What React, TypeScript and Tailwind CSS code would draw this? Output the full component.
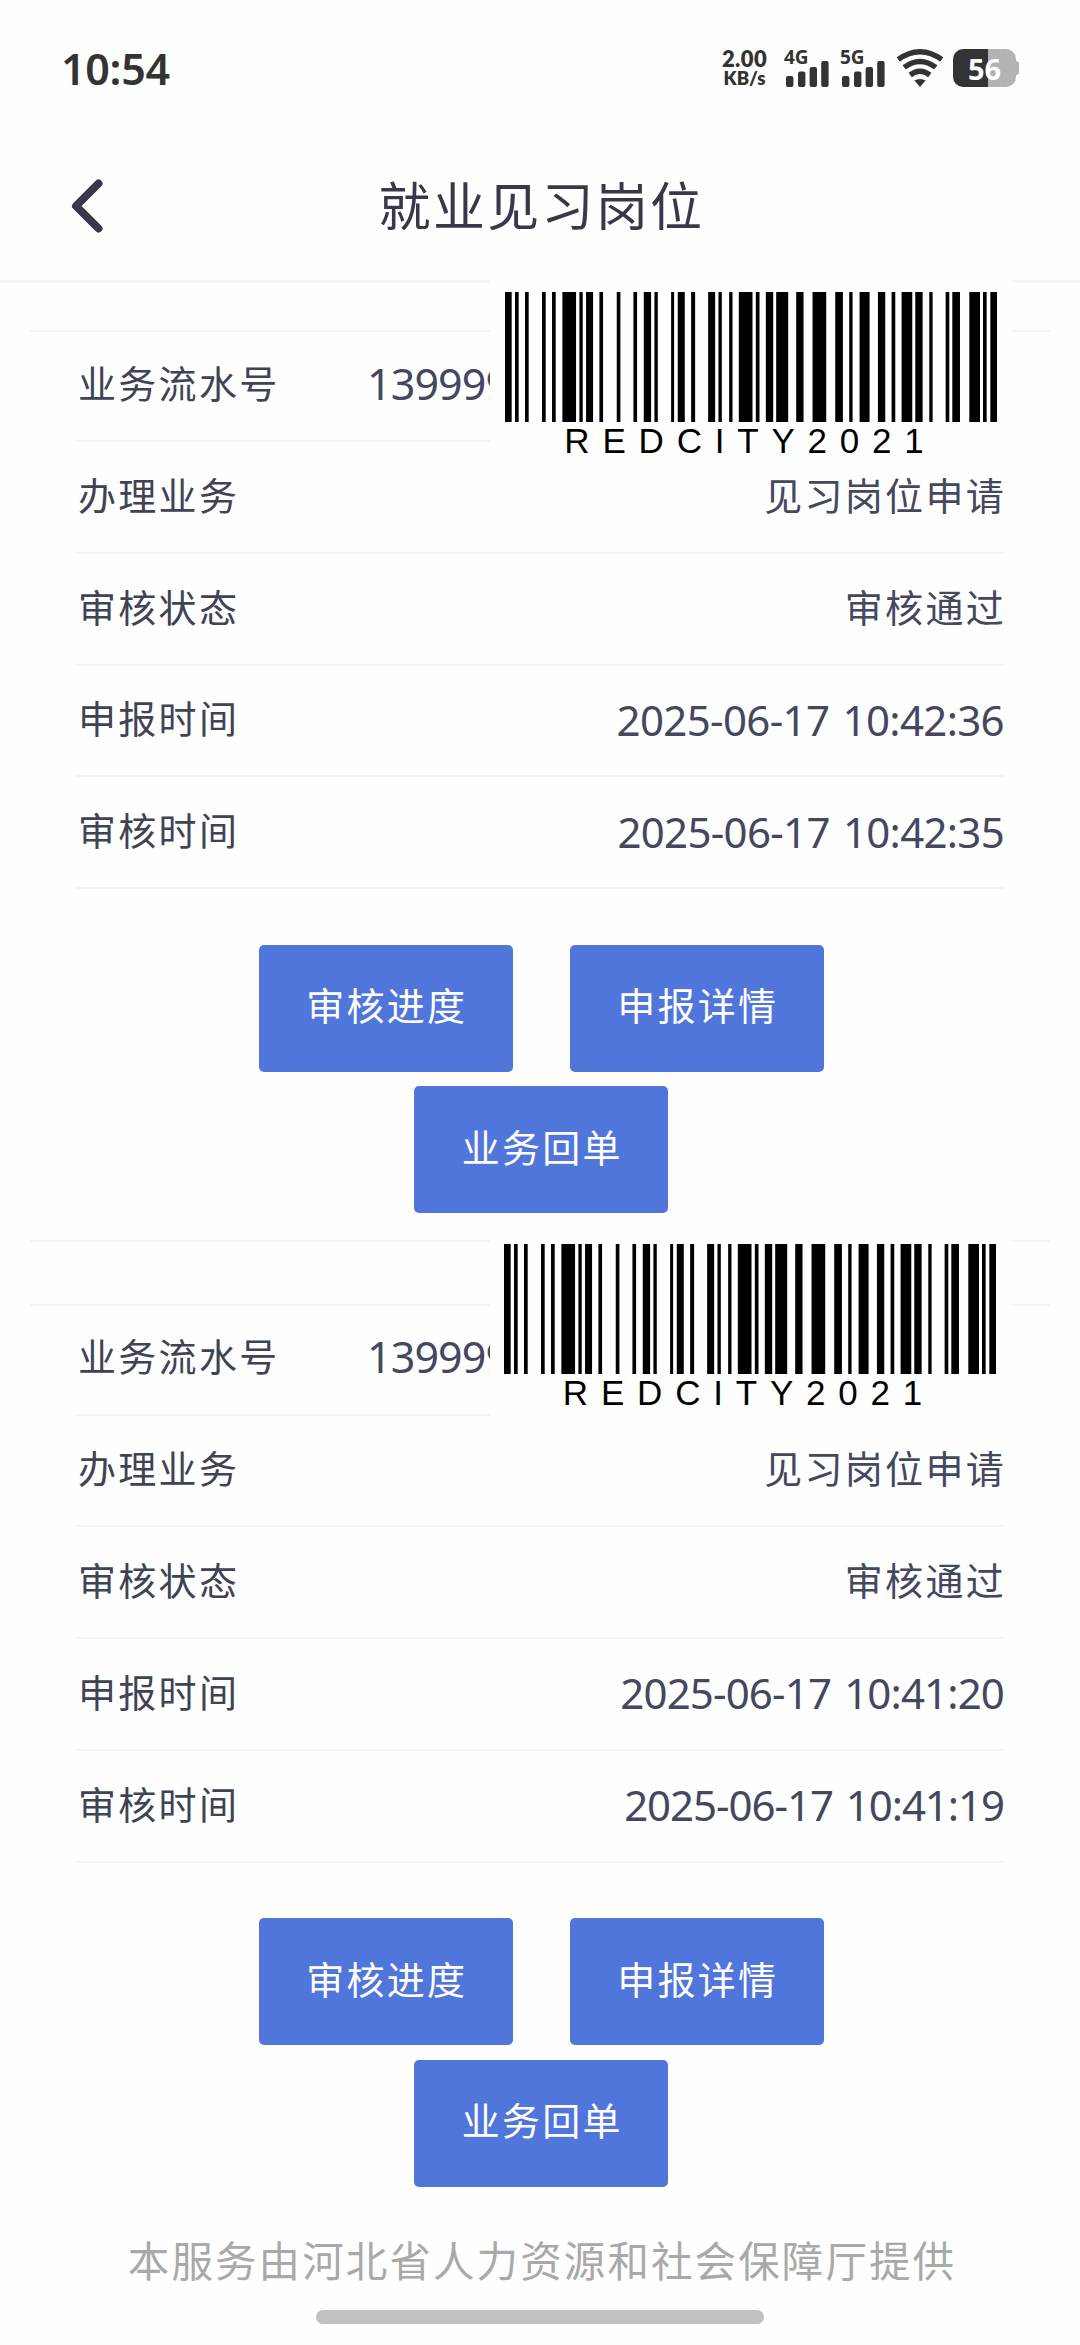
type Field = {
  label: string;
  value: string;
  valueClass?: string;
};

type ServiceRecord = {
  serial: string;
  fields: Field[];
};

const records: ServiceRecord[] = [
  {
    serial: '139999999',
    fields: [
      { label: '办理业务', value: '见习岗位申请' },
      { label: '审核状态', value: '审核通过' },
      { label: '申报时间', value: '2025-06-17 10:42:36', valueClass: 'tracking-[-0.65px]' },
      { label: '审核时间', value: '2025-06-17 10:42:35', valueClass: 'tracking-[-0.7px]' },
    ],
  },
  {
    serial: '139999999',
    fields: [
      { label: '办理业务', value: '见习岗位申请' },
      { label: '审核状态', value: '审核通过' },
      { label: '申报时间', value: '2025-06-17 10:41:20', valueClass: 'tracking-[-0.85px]' },
      { label: '审核时间', value: '2025-06-17 10:41:19', valueClass: 'tracking-[-1.05px]' },
    ],
  },
];

// [start, end] of every bar, in thirds of a pixel
const BARS = [
  [0, 20], [30, 41], [60, 71], [111, 122], [141, 152], [172, 213], [223, 233], [243, 264],
  [283, 294], [335, 346], [385, 396], [416, 438], [448, 458], [498, 507], [518, 539],
  [558, 570], [609, 630], [640, 650], [672, 682], [701, 742], [752, 763], [782, 804],
  [813, 849], [873, 895], [922, 963], [990, 1013], [1032, 1042], [1063, 1093], [1118, 1140],
  [1159, 1170], [1189, 1221], [1230, 1252], [1272, 1282], [1321, 1332], [1341, 1364],
  [1392, 1424], [1433, 1444], [1455, 1475],
];

const cjkText = 'text-[38px] tracking-[2.3px]';

function Barcode() {
  return (
    <div className="flex flex-col items-center">
      <svg width="492" height="130" viewBox="0 0 1475 130" preserveAspectRatio="none">
        {BARS.map(([start, end]) => (
          <rect key={start} x={start} y="0" width={end - start} height="130" fill="#000" />
        ))}
      </svg>
      <p className="-mt-px pr-px font-['Liberation_Sans',sans-serif] text-[35px] leading-[40px] tracking-[12.8px] text-black">
        REDCITY2021
      </p>
    </div>
  );
}

function Signal({ label }: { label: string }) {
  return (
    <div className="relative h-[38px] w-[43px]">
      <span className="absolute -top-[2px] -left-[2px] text-[19px] leading-5 font-bold tracking-[-0.2px]">
        {label}
      </span>
      <svg className="absolute inset-0" width="43" height="38" viewBox="0 0 43 38" fill="#333">
        <rect x="0" y="27" width="7.4" height="11" rx="2" />
        <rect x="12" y="22.5" width="7.4" height="15.5" rx="2" />
        <rect x="23.6" y="18" width="7.4" height="20" rx="2" />
        <rect x="35.2" y="12" width="7.4" height="26" rx="2" />
      </svg>
    </div>
  );
}

function WifiIcon() {
  return (
    <svg width="48" height="39" viewBox="0 0 48 39" fill="none" stroke="#333" strokeWidth="5.4">
      <path d="M2.2 10.5Q24-5 45.8 10.5" />
      <path d="M8.2 18.3Q24 6.5 39.8 18.3" />
      <path d="M14.2 26Q24 18.5 33.8 26" />
      <path d="M24 38L18.3 31.6Q24 28.4 29.7 31.6Z" fill="#333" stroke="none" />
    </svg>
  );
}

function Battery() {
  return (
    <div className="flex items-center">
      <div className="flex h-[38px] w-[63px] items-center justify-center rounded-[10px] bg-linear-to-r from-[#333] from-56% to-[#b3b3b3] to-56%">
        <span className="text-[29px] leading-none font-bold text-white">56</span>
      </div>
      <div className="h-[14px] w-[3px] rounded-r-sm bg-[#b3b3b3]" />
    </div>
  );
}

function StatusBar() {
  return (
    <div className="flex h-[136px] items-center justify-between pr-[61px] pl-[61px] text-[#333]">
      <span className="text-[43px] leading-none font-semibold tracking-[-0.3px]">10:54</span>
      <div className="flex items-center">
        <div className="mr-[17px] flex w-[49px] flex-col items-center font-['Lato',sans-serif] font-extrabold">
          <span className="text-[22px] leading-[21px] tracking-[0.4px]">2.00</span>
          <span className="text-[18.5px] leading-[19px]">KB/s</span>
        </div>
        <Signal label="4G" />
        <div className="w-[13px]" />
        <Signal label="5G" />
        <div className="w-[11px]" />
        <WifiIcon />
        <div className="w-[9px]" />
        <Battery />
      </div>
    </div>
  );
}

function TitleBar() {
  return (
    <header className="grid h-[147px] grid-cols-[1fr_auto_1fr] items-center border-b-3 border-[#f5f5f6] px-[70px] pb-[4px]">
      <button type="button" aria-label="返回" className="justify-self-start">
        <svg width="34" height="56" viewBox="0 0 34 56" fill="none">
          <path
            d="M28.5 5.5L6 28L28.5 50.5"
            stroke="#38384b"
            strokeWidth="8"
            strokeLinecap="round"
            strokeLinejoin="round"
          />
        </svg>
      </button>
      <h1 className="pl-[3px] text-[52px] leading-none tracking-[2.3px] text-[#38384b]">
        就业见习岗位
      </h1>
    </header>
  );
}

function ActionButton({ children }: { children: string }) {
  return (
    <button
      type="button"
      className={`h-[127px] w-[254px] rounded-[5px] bg-[#5176db] pb-[5px] pl-[2px] text-white ${cjkText}`}
    >
      {children}
    </button>
  );
}

function RecordCard({ record }: { record: ServiceRecord }) {
  return (
    <section>
      <div className="mx-[30px] border-t-2 border-[#f5f5f6]" />
      <dl className="mx-[76px]">
        <div className="flex h-[110px] items-center border-b-2 border-[#f3f4f5] pb-[6px] pl-[2px]">
          <dt className={`w-[289px] text-[#3f4354] ${cjkText}`}>业务流水号</dt>
          <dd className="pt-[2px] text-[43px] tracking-[-0.9px] text-[#44485f]">
            {record.serial}
          </dd>
        </div>
        {record.fields.map((f) => (
          <div
            key={f.label}
            className="flex h-[111.75px] items-center justify-between border-b-2 border-[#f3f4f5] pl-[2px]"
          >
            <dt className={`pb-[3px] text-[#3f4354] ${cjkText}`}>{f.label}</dt>
            <dd
              className={`text-[#44485f] ${f.valueClass ? `pb-[2px] text-[42px] [word-spacing:3px] ${f.valueClass}` : `-mr-[2px] pb-[3px] ${cjkText}`}`}
            >
              {f.value}
            </dd>
          </div>
        ))}
      </dl>
      <div className="flex flex-wrap justify-center gap-x-[57px] gap-y-[14.5px] pt-[55.5px] pr-[199px] pl-[201.5px]">
        <ActionButton>审核进度</ActionButton>
        <ActionButton>申报详情</ActionButton>
        <ActionButton>业务回单</ActionButton>
      </div>
    </section>
  );
}

export default function App() {
  return (
    <div className="flex h-[2345px] w-[1080px] flex-col overflow-hidden bg-[#fefefe] font-['Noto_Sans','Noto_Sans_CJK_SC',sans-serif]">
      <StatusBar />
      <TitleBar />
      <main>
        <div className="relative pt-[47px]">
          <div className="absolute top-[-8px] left-[490px] z-10 flex h-[190px] w-[522px] justify-center bg-[#fefefe] pt-[17px]">
            <Barcode />
          </div>
          <RecordCard record={records[0]} />
        </div>
        <div className="relative mt-[27px]">
          <div className="mx-[30px] h-[63.5px] border-t-2 border-[#f5f5f6]" />
          <div className="absolute top-[-8px] left-[490px] z-10 flex h-[190px] w-[521px] justify-center bg-[#fefefe] pt-[12px] pr-[2px]">
            <Barcode />
          </div>
          <RecordCard record={records[1]} />
        </div>
      </main>
      <footer className="flex flex-1 flex-col items-center justify-between pt-[43px] pb-[21px]">
        <p className="pl-[4px] text-[41.5px] tracking-[2.1px] text-[#a9a9a9]">
          本服务由河北省人力资源和社会保障厅提供
        </p>
        <div className="h-[14px] w-[448px] rounded-full bg-[#c1c1c1]" />
      </footer>
    </div>
  );
}
